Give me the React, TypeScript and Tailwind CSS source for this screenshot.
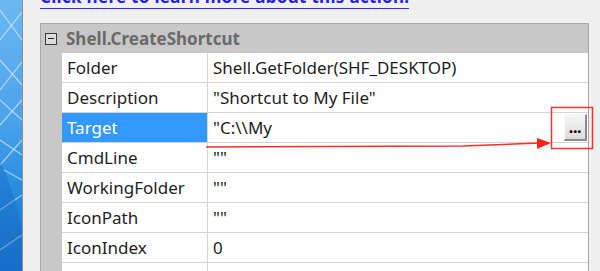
import React from "react";

const rows: { name: string; value: string; selected?: boolean }[] = [
  { name: "Folder", value: "Shell.GetFolder(SHF_DESKTOP)" },
  { name: "Description", value: "\"Shortcut to My File\"" },
  { name: "Target", value: "\"C:\\\\My", selected: true },
  { name: "CmdLine", value: "\"\"" },
  { name: "WorkingFolder", value: "\"\"" },
  { name: "IconPath", value: "\"\"" },
  { name: "IconIndex", value: "0" },
  { name: "WindowMode", value: "SW_SHOWNORMAL" },
];

function Wallpaper() {
  return (
    <svg width="22" height="271" viewBox="0 0 22 271" className="block shrink-0">
      <defs>
        <linearGradient id="wp" x1="0" y1="0" x2="0" y2="1">
          <stop offset="0" stopColor="#6cb8f2" />
          <stop offset="0.45" stopColor="#4aa2ea" />
          <stop offset="0.75" stopColor="#2387dc" />
          <stop offset="1" stopColor="#1a72cc" />
        </linearGradient>
      </defs>
      <rect width="22" height="271" fill="url(#wp)" />
      <g stroke="#ffffff" strokeOpacity="0.55" strokeWidth="1.2" fill="none">
        <path d="M0 10 L22 40" />
        <path d="M0 40 L22 12" />
        <path d="M0 60 L22 85" />
        <path d="M0 90 L22 62" />
        <path d="M0 100 L22 120" />
        <path d="M0 125 L22 100" />
        <path d="M0 140 L22 155" />
        <path d="M0 165 L22 140" />
        <path d="M4 170 L22 180" />
        <path d="M0 210 L22 195" />
        <path d="M0 250 L22 235" />
      </g>
      <path d="M0 160 Q14 190 22 230 L22 271 L0 271 Z" fill="#1665bd" fillOpacity="0.35" />
    </svg>
  );
}

export default function App() {
  return (
    <div
      className="w-[600px] h-[271px] overflow-hidden flex bg-[#f0f0f0]"
      style={{ fontFamily: '"Noto Sans", "Open Sans", "Liberation Sans", sans-serif' }}
    >
      <Wallpaper />
      <div className="w-px h-full bg-[#8c8c8c] shrink-0" />
      <div className="relative flex-1 flex flex-col pl-[17px] overflow-hidden">
        <div className="h-[23px] shrink-0 relative overflow-hidden">
          <div className="absolute left-0 top-[-13px] text-[17px] font-bold text-[#2424f0] leading-[20px] whitespace-nowrap border-b-[1.5px] border-[#3030f0] pb-[1px] tracking-[0.3px]">
            Click here to learn more about this action.
          </div>
        </div>
        <div className="w-[549px] shrink-0 border-t border-l border-r border-[#a8a8a8] bg-[#c8c8c8] flex flex-col">
          <div className="h-[29px] shrink-0 flex items-center">
            <div className="w-[21px] flex justify-center items-center pr-[2px]">
              <div className="w-[12px] h-[12px] border border-[#3a3a3a] bg-[#dcdcdc] flex items-center justify-center">
                <div className="w-[6px] h-[1.5px] bg-[#202020]" />
              </div>
            </div>
            <span className="pl-[4px] text-[17px] font-bold text-[#6a6a6a]">Shell.CreateShortcut</span>
          </div>
          {rows.map((r) => (
            <div key={r.name} className="h-[30px] shrink-0 flex ml-[21px] bg-white border-b border-[#d4d4d4]">
              <div
                className={
                  "w-[146px] border-r border-[#d4d4d4] flex items-center pl-[5px] text-[17px] " +
                  (r.selected ? "bg-[#3399ff] text-white" : "text-[#1e1e1e]")
                }
              >
                {r.name}
              </div>
              <div className="flex-1 flex items-center pl-[5px] text-[17px] text-[#1e1e1e] relative">
                {r.value}
                {r.selected && (
                  <div className="absolute right-[1px] top-[1px] w-[23px] h-[27px] bg-gradient-to-b from-[#f7f7f7] to-[#dcdcdc] border-r-2 border-b-2 border-[#8a8a8a] border-l border-t border-l-[#fafafa] border-t-[#fafafa] flex items-end justify-center pb-[4px]">
                    <span className="text-[16px] font-bold leading-none text-black tracking-[-0.3px]">...</span>
                  </div>
                )}
              </div>
            </div>
          ))}
        </div>
        <svg
          className="absolute left-0 top-0 pointer-events-none"
          width="577"
          height="271"
          viewBox="23 0 577 271"
        >
          <polyline
            points="206,147 463,146 540,143"
            fill="none"
            stroke="#ff2a2a"
            strokeWidth="1.5"
          />
          <polygon points="537,138 551,143 537,149" fill="#ff2020" />
          <rect x="551.5" y="107.5" width="41" height="41" fill="none" stroke="#ff3030" strokeWidth="1.5" />
        </svg>
      </div>
    </div>
  );
}
